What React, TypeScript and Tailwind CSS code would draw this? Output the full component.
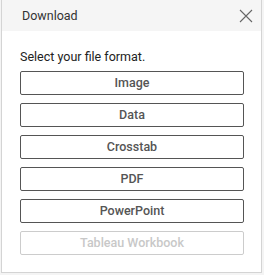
import React from 'react';

const formats = ['Image', 'Data', 'Crosstab', 'PDF', 'PowerPoint'];

export default function App() {
  return (
    <div className="w-[264px] h-[275px] bg-[#f4f4f4] pl-px pr-[2px] font-['Roboto',sans-serif]">
      <div className="w-full h-[273px] bg-white border-x border-b border-[#d4d4d4] flex flex-col">
        <div className="h-[31px] bg-[#f5f5f5] flex items-center justify-between pl-[20px] pr-[7px]">
          <span className="text-[12.5px] text-[#333] pt-px">Download</span>
          <svg width="16" height="16" viewBox="0 0 16 16" className="text-[#666]">
            <path d="M2 2 L14 14 M14 2 L2 14" stroke="currentColor" strokeWidth="1.1" fill="none" />
          </svg>
        </div>
        <div className="px-[18px] pt-[18px]">
          <p className="text-[12.5px] text-[#222] leading-[15px]">Select your file format.</p>
          <div className="mt-[7px] flex flex-col gap-[8px]">
            {formats.map((f) => (
              <button
                key={f}
                className="h-[24px] w-[224px] border border-[#555] rounded-[2px] text-[12.5px] font-medium text-[#555] leading-none"
              >
                {f}
              </button>
            ))}
            <button className="h-[24px] w-[224px] border border-[#ccc] rounded-[2px] text-[12.5px] font-medium text-[#c8c8c8] leading-none">
              Tableau Workbook
            </button>
          </div>
        </div>
      </div>
    </div>
  );
}
